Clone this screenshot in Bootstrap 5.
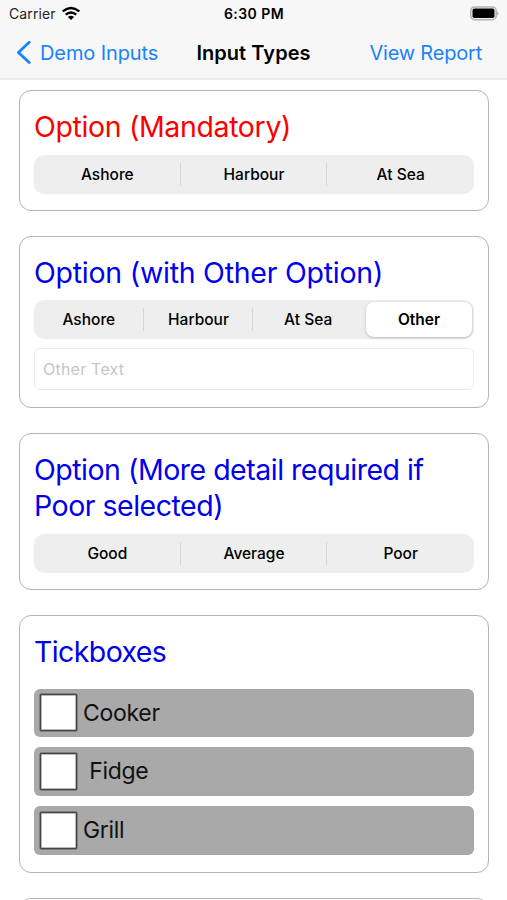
<!DOCTYPE html>
<html lang="en">
<head>
<meta charset="utf-8">
<meta name="viewport" content="width=device-width, initial-scale=1">
<title>Input Types</title>
<link href="https://cdn.jsdelivr.net/npm/bootstrap@5.3.0/dist/css/bootstrap.min.css" rel="stylesheet">
<style>
body{font-family:Inter,"Liberation Sans",sans-serif;color:#000;background:#fff;height:900px;overflow:hidden}
.topbar{height:80px;background:#f7f7f7;border-bottom:2px solid #ebebeb}
.status{height:28px;font-size:14px;line-height:28px;padding:0 8px 0 9px}
.clock{font-weight:600;letter-spacing:.45px}
.carrier{letter-spacing:.1px;color:#222}
.side{flex:1 1 0}
.titles{height:49px;font-size:20px;line-height:49px;padding:1px 16px 0}
.titles a{color:#1a82fb;text-decoration:none;letter-spacing:-.1px}
.titles .report{margin-right:9px;letter-spacing:-.2px}
.screen-title{font-weight:600;letter-spacing:.05px}
.cards{padding:10px 18px 0 19px;gap:25px}
.panel{border:1px solid #b4b4b4;border-radius:12px;padding:18px 14px 16px 14px;flex:none}
.q{font-size:28.5px;line-height:36.5px;font-weight:400;margin:0 0 9px;letter-spacing:-.24px}
.q.blue{color:#0000ea}
.q.required{color:#fa0000;letter-spacing:-.36px}
.q.snug{letter-spacing:-.49px}
.q.tight{letter-spacing:-.6px}
.segments{height:39px;background:#eee;border-radius:10px;font-size:15.5px;font-weight:500}
.segments>div{flex:1 1 0;line-height:23px;height:23px;margin-left:-1px}
.segments>div:first-child{margin-left:0}
.segments>.split{border-left:1px solid #d6d6d6}
.segments>.picked{flex:0 0 106px;height:35px;line-height:35px;background:#fff;border-radius:8px;font-weight:600;margin:0 2px 0 3px;box-shadow:0 1px 3px rgba(0,0,0,.22)}
.other{height:42px;border:1px solid #ebebeb;border-radius:6px;font-size:16px;padding:0 8px;margin:9px 0 .5px;letter-spacing:.22px}
.other::placeholder{color:#c6c6c8;opacity:1}
.ticks{gap:10px;margin:18.5px 0 1.3px}
.tick{height:48.7px;background:#a9a9a9;border-radius:6px;font-size:23px;letter-spacing:-.3px;padding-left:5.5px;color:#111}
.box{width:37px;height:37px;background:#fff;border:1px solid #444;box-shadow:0 0 0 .5px #555,inset 0 0 0 .5px #777;border-radius:1px;margin-right:6.5px}
</style>
</head>
<body>
<header class="topbar">
  <div class="status d-flex align-items-center">
    <div class="side d-flex align-items-center"><span class="carrier">Carrier</span>
      <svg width="20" height="15" viewBox="0 0 20 15" style="margin:-2px 0 0 5px"><g fill="none" stroke="#000" stroke-width="2.4"><path d="M1.7 5.4Q10-1.2 18.3 5.4"/><path d="M4.7 8.6Q10 4.2 15.3 8.6"/></g><path d="M6.9 11Q10 8.6 13.1 11L10 14Z"/></svg>
    </div>
    <span class="clock">6:30 PM</span>
    <div class="side d-flex justify-content-end">
      <svg width="31" height="16" viewBox="0 0 31 16"><rect x="2.8" y=".9" width="25.4" height="12.8" rx="3.8" fill="#f7f7f7" stroke="#b2b2b2" stroke-width="1.5"/><rect x="4.5" y="2.6" width="22" height="9.4" rx="1.8"/><path d="M29.1 4.9Q32 7.3 29.1 9.7Z" fill="#b2b2b2"/></svg>
    </div>
  </div>
  <nav class="titles d-flex align-items-center">
    <div class="side"><a href="#" class="d-flex align-items-center gap-2 text-nowrap"><svg width="16" height="24" viewBox="0 0 16 24"><path d="M13.2 1.2 2.4 11.4 13.2 21.6" fill="none" stroke="#1a82fb" stroke-width="2.8" stroke-linecap="round" stroke-linejoin="round"/></svg><span>Demo Inputs</span></a></div>
    <span class="screen-title">Input Types</span>
    <div class="side text-end"><a href="#" class="report">View Report</a></div>
  </nav>
</header>
<main class="cards d-flex flex-column">
  <section class="panel">
    <h2 class="q required">Option (Mandatory)</h2>
    <div class="segments d-flex align-items-center text-center">
      <div>Ashore</div><div class="split">Harbour</div><div class="split">At Sea</div>
    </div>
  </section>
  <section class="panel">
    <h2 class="q blue">Option (with Other Option)</h2>
    <div class="segments d-flex align-items-center text-center">
      <div>Ashore</div><div class="split">Harbour</div><div class="split">At Sea</div><div class="picked">Other</div>
    </div>
    <input class="other form-control" placeholder="Other Text" aria-label="Other Text">
  </section>
  <section class="panel">
    <h2 class="q blue snug">Option (More detail required if Poor selected)</h2>
    <div class="segments d-flex align-items-center text-center">
      <div>Good</div><div class="split">Average</div><div class="split">Poor</div>
    </div>
  </section>
  <section class="panel">
    <h2 class="q blue tight">Tickboxes</h2>
    <div class="ticks d-flex flex-column">
      <div class="tick d-flex align-items-center"><span class="box"></span>Cooker</div>
      <div class="tick d-flex align-items-center"><span class="box"></span>&nbsp;Fidge</div>
      <div class="tick d-flex align-items-center"><span class="box"></span>Grill</div>
    </div>
  </section>
  <section class="panel"></section>
</main>
<script src="https://cdn.jsdelivr.net/npm/bootstrap@5.3.0/dist/js/bootstrap.bundle.min.js"></script>
</body>
</html>
